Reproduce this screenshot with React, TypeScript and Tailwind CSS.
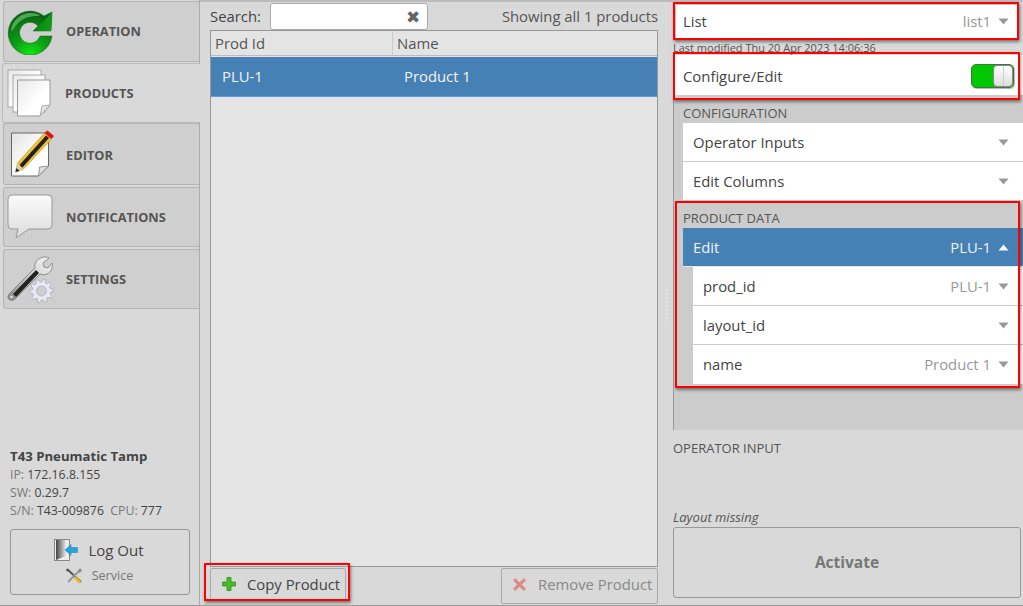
import React from "react";

const Caret = ({ up = false, color = "#999" }: { up?: boolean; color?: string }) => (
  <svg width="11" height="7" viewBox="0 0 11 7" className="shrink-0">
    <path d={up ? "M0.5 6.5 L5.5 0.5 L10.5 6.5 Z" : "M0.5 0.5 L10.5 0.5 L5.5 6.5 Z"} fill={color} />
  </svg>
);

const Marker = ({ className }: { className: string }) => (
  <div className={`absolute z-20 border-2 border-[#f00] shadow-[1px_2px_3px_rgba(0,0,0,0.45)] pointer-events-none ${className}`} />
);

const RefreshIcon = () => (
  <svg width="46" height="46" viewBox="0 0 46 46">
    <defs>
      <radialGradient id="g1" cx="0.5" cy="1" r="1">
        <stop offset="0" stopColor="#10ee10" />
        <stop offset="0.4" stopColor="#0ca014" />
        <stop offset="1" stopColor="#0a5c12" />
      </radialGradient>
      <linearGradient id="g2" x1="0" y1="0" x2="1" y2="0">
        <stop offset="0" stopColor="#0a8412" />
        <stop offset="1" stopColor="#0d9e16" />
      </linearGradient>
    </defs>
    <path d="M45 27 A22 22 0 1 1 37 7 L45 3 L44 22 L26 22 L31 17 A10.5 10.5 0 1 0 33 27 Z" fill="url(#g1)" stroke="#0a5c12" strokeWidth="0.5" />
    <path d="M45 3 L44 22 L26 22 L36 13 Z" fill="url(#g2)" />
    <path d="M4 22 C5 11 14 4 24 4 C28 4 31 5 33 7 C26 6.5 17 8 11 14 C8 17 6 22 4 22 Z" fill="#8ad88a" opacity="0.55" />
  </svg>
);

const PagesIcon = () => (
  <svg width="44" height="48" viewBox="0 0 44 48">
    <defs>
      <linearGradient id="p1" x1="0" y1="0" x2="1" y2="1">
        <stop offset="0" stopColor="#e8e8e8" />
        <stop offset="0.6" stopColor="#ffffff" />
      </linearGradient>
    </defs>
    <rect x="1" y="1" width="33" height="37" fill="url(#p1)" stroke="#aaa" />
    <rect x="6" y="6" width="32" height="37" fill="url(#p1)" stroke="#aaa" />
    <path d="M10.5 11 H43 V36 L33 47 H10.5 Z" fill="url(#p1)" stroke="#999" />
    <path d="M33 47 L35 37 L43 36 Z" fill="#e4e4e4" stroke="#aaa" />
  </svg>
);

const EditorIcon = () => (
  <svg width="46" height="48" viewBox="0 0 46 48" className="overflow-visible">
    <defs>
      <linearGradient id="e1" x1="0" y1="0" x2="1" y2="1">
        <stop offset="0" stopColor="#e4e4e4" />
        <stop offset="0.6" stopColor="#ffffff" />
      </linearGradient>
    </defs>
    <g transform="translate(2.5 0)">
      <path d="M2 3 H39 V36 L29 46 H2 Z" fill="url(#e1)" stroke="#666" />
      <path d="M29 46 L30 37 L39 36 Z" fill="#ddd" stroke="#999" />
      <path d="M6 42 L8 33 L35 3 L42 9 L14 39 Z" fill="#f2c230" stroke="#b58c12" strokeWidth="0.6" />
      <path d="M9.5 35.5 L36.5 5.5 L39.5 8 L12.5 38 Z" fill="#222" />
      <path d="M35 3 L38 0.5 L44.5 6 L42 9 Z" fill="#d81818" />
      <path d="M6 42 L8 33 L14 39 Z" fill="#e4c9a0" />
      <path d="M6 42 L7 38 L10 41 Z" fill="#222" />
    </g>
  </svg>
);

const BubbleIcon = () => (
  <svg width="46" height="46" viewBox="0 0 46 46">
    <defs>
      <linearGradient id="b1" x1="0" y1="0" x2="0" y2="1">
        <stop offset="0" stopColor="#fbfbfb" />
        <stop offset="1" stopColor="#dcdcdc" />
      </linearGradient>
    </defs>
    <path d="M5 1 H41 A4 4 0 0 1 45 5 V31 A4 4 0 0 1 41 35 H22 L9 44 L11 35 H5 A4 4 0 0 1 1 31 V5 A4 4 0 0 1 5 1 Z" fill="url(#b1)" stroke="#999" strokeWidth="1" />
  </svg>
);

const gearPath = (() => {
  const cx = 34.5;
  const cy = 36;
  const teeth = 10;
  const pts: string[] = [];
  for (let i = 0; i < teeth; i++) {
    const a = (i / teeth) * Math.PI * 2;
    const step = (Math.PI * 2) / teeth;
    const rad: [number, number][] = [
      [9, -0.5],
      [11.8, -0.28],
      [11.8, 0.05],
      [9, 0.22],
    ];
    rad.forEach(([r, off]) => {
      const t = a + off * step;
      pts.push(`${(cx + r * Math.cos(t)).toFixed(2)} ${(cy + r * Math.sin(t)).toFixed(2)}`);
    });
  }
  return `M${pts.join(" L")} Z M${cx + 5} ${cy} A5 5 0 1 0 ${cx - 5} ${cy} A5 5 0 1 0 ${cx + 5} ${cy} Z`;
})();

const SettingsIcon = () => (
  <svg width="48" height="48" viewBox="0 0 48 48" className="overflow-visible">
    <defs>
      <linearGradient id="w1" x1="0" y1="1" x2="1" y2="0">
        <stop offset="0" stopColor="#888" />
        <stop offset="0.6" stopColor="#d8d8d8" />
        <stop offset="1" stopColor="#f4f4f4" />
      </linearGradient>
    </defs>
    <path d="M1 42 C1 40 2 39 3 38 L28 13 C27 8 30 3 37 2 C39 2 40 2 42 3 L36 8 L37 12 L41 13 L45 8 C46 13 44 17 40 19 C38 20 35 20 33 19 L8 44 C6 46 1 46 1 42 Z" fill="url(#w1)" stroke="#777" strokeWidth="0.8" />
    <path d="M6 39 L29 15 L32 18 L9 42 Z" fill="#222" />
    <circle cx="4.5" cy="42" r="1.8" fill="#ddd" stroke="#777" strokeWidth="0.6" />
    <path d={gearPath} fill="#e9e9f3" stroke="#a8a8c4" strokeWidth="0.8" fillRule="evenodd" />
  </svg>
);

const DoorIcon = () => (
  <svg width="24" height="22" viewBox="0 0 24 22">
    <defs>
      <linearGradient id="d1" x1="0" y1="0" x2="1" y2="0">
        <stop offset="0" stopColor="#444" />
        <stop offset="1" stopColor="#e8e8e8" />
      </linearGradient>
    </defs>
    <rect x="0.5" y="0.5" width="15" height="21" fill="#eee" stroke="#888" />
    <path d="M2 1 L12 1 L12 17 L2 21 Z" fill="url(#d1)" />
    <path d="M11 11 L17 5.5 V8.5 H23.5 V13.5 H17 V16.5 Z" fill="#27a3e0" stroke="#1b7fb8" strokeWidth="0.5" />
  </svg>
);

const ToolsIcon = () => (
  <svg width="18" height="16" viewBox="0 0 18 16">
    <path d="M2 1 L16 14" stroke="#555" strokeWidth="2" />
    <path d="M16 1 L3 14" stroke="#999" strokeWidth="2" />
    <path d="M10 9 L15 14.5" stroke="#e8b820" strokeWidth="3" />
    <path d="M14 0.5 L17 3 L14 5 Z" fill="#888" />
    <path d="M1 1 L4 1 L2 4 Z" fill="#555" />
  </svg>
);

const PlusIcon = () => (
  <svg width="14" height="14" viewBox="0 0 14 14">
    <path d="M5 0.5 H9 V5 H13.5 V9 H9 V13.5 H5 V9 H0.5 V5 H5 Z" fill="#4cbb2a" stroke="#2f8a18" strokeWidth="0.8" />
  </svg>
);

const CrossIcon = () => (
  <svg width="13" height="13" viewBox="0 0 13 13">
    <path d="M2 0.5 L6.5 4.5 L11 0.5 L12.5 2.5 L8.5 6.5 L12.5 10.5 L11 12.5 L6.5 8.5 L2 12.5 L0.5 10.5 L4.5 6.5 L0.5 2.5 Z" fill="#e08a8a" stroke="#c77" strokeWidth="0.5" />
  </svg>
);

const Row = ({ label, value }: { label: string; value?: string }) => (
  <div className="flex items-center h-[39px] bg-white border-b border-[#ccc] last:border-b-0 pr-[14px] pl-[10px]">
    <span className="flex-1 text-[#444]">{label}</span>
    {value && <span className="text-[#999] mr-[7px]">{value}</span>}
    <Caret />
  </div>
);

const Tab = ({ label, icon, className, labelClass = "" }: { label: string; icon: React.ReactNode; className: string; labelClass?: string }) => (
  <div className={`flex items-center ml-[3px] pl-[3px] border border-r-0 border-[#b4b4b4] rounded-l-[3px] bg-[#cfcfcf] ${className}`}>
    <div className="w-[46px] flex justify-start"><span className="flex">{icon}</span></div>
    <span className={`ml-[13px] text-[12.8px] font-bold text-[#555] ${labelClass}`}>{label}</span>
  </div>
);

export default function App() {
  return (
    <div className="w-[1023px] h-[606px] overflow-hidden flex bg-[#d9d9d9] text-[14.85px] text-[#444] border-b border-[#999]" style={{ fontFamily: '"Open Sans", sans-serif' }}>
      {/* Sidebar */}
      <aside className="w-[200px] h-full shrink-0 flex flex-col border-r border-[#aaa] pt-px">
        <Tab label="OPERATION" icon={<RefreshIcon />} className="h-[61px] mb-px" />
        <div className="flex items-center h-[60px] -mr-px ml-[2px] pl-[4px] border border-r-0 border-[#bbb] rounded-l-[3px] bg-[#d9d9d9] relative z-10">
          <div className="w-[44px] flex justify-start"><span className="flex"><PagesIcon /></span></div>
          <span className="ml-[14px] pt-[2px] text-[12.8px] font-bold text-[#555]">PRODUCTS</span>
        </div>
        <Tab label="EDITOR" icon={<EditorIcon />} className="h-[62px] mb-[2px]" labelClass="pt-[4px]" />
        <Tab label="NOTIFICATIONS" icon={<BubbleIcon />} className="h-[60px] mb-[2px]" labelClass="pt-[2px]" />
        <Tab label="SETTINGS" icon={<SettingsIcon />} className="h-[60px]" labelClass="pt-[2px]" />
        <div className="mt-auto pl-[10px] pr-[9px] pb-[10px] text-[12.3px] leading-[18px]">
          <div className="font-bold text-[#444] text-[13.2px] mb-px">T43 Pneumatic Tamp</div>
          <div className="text-[#777]">IP: <span className="text-[#444]">172.16.8.155</span></div>
          <div className="text-[#777]">SW: <span className="text-[#444]">0.29.7</span></div>
          <div className="text-[#777]">S/N: <span className="text-[#444]">T43-009876</span>&nbsp; CPU: <span className="text-[#444]">777</span></div>
          <div className="mt-[9px] h-[66px] border border-[#999] rounded-[3px] flex flex-col items-center justify-center">
            <div className="flex items-center gap-[10px] mr-[2px] text-[15px] leading-[22px] text-[#444]"><DoorIcon /><span>Log Out</span></div>
            <div className="flex items-center gap-[9px] mr-[2px] mt-[6px] text-[12.6px] text-[#777]"><ToolsIcon /><span>Service</span></div>
          </div>
        </div>
      </aside>

      {/* Middle column */}
      <main className="w-[473px] shrink-0 h-full flex flex-col border-t-2 border-[#bbb] pl-[10px] pr-[15px] relative">
        <div className="flex items-center h-[28px] shrink-0">
          <span className="w-[60px]">Search:</span>
          <div className="w-[158px] h-[27px] bg-white border border-[#aaa] rounded-[3px] flex items-center justify-end pr-[7px]">
            <span className="text-[17px] leading-none text-[#666]">✖</span>
          </div>
          <span className="ml-auto text-[#555]">Showing all 1 products</span>
        </div>
        <div className="flex-1 border border-[#999] bg-[#e4e4e4] flex flex-col min-h-0">
          <div className="flex h-[25px] border-b border-[#bbb] shrink-0 items-center mb-px">
            <span className="w-[182px] pl-[4px] border-r border-[#ccc] h-full flex items-center text-[#555]">Prod Id</span>
            <span className="pl-[4px] text-[#555]">Name</span>
          </div>
          <div className="flex h-[40px] items-center bg-[#4581b5] border-b border-[#5c9ad6] text-[#f2f2f2] shrink-0">
            <span className="w-[193px] pl-[11px]">PLU-1</span>
            <span>Product 1</span>
          </div>
        </div>
        <div className="flex justify-between h-[38px] pt-px shrink-0">
          <div className="relative h-[32px] w-[136px]">
            <button className="w-full h-full border border-[#aaa] rounded-[2px] flex items-center pl-[11px] gap-[11px] text-[#444]"><PlusIcon /><span>Copy Product</span></button>
            <Marker className="-left-[6px] -top-[5px] -right-[4px] -bottom-[1px]" />
          </div>
          <button className="h-[36px] w-[157px] border border-[#aaa] rounded-[2px] flex items-center pl-[11px] pb-[3px] gap-[12px] text-[#888]"><CrossIcon /><span>Remove Product</span></button>
        </div>
        {/* splitter */}
        <div className="absolute right-[5px] top-[286px] w-[3px] h-[34px] [background-image:radial-gradient(circle,#eee_1px,transparent_1px)] [background-size:3px_4px]" />
      </main>

      {/* Right column */}
      <section className="flex-1 h-full flex flex-col border-t-2 border-[#bbb] min-w-0 relative">
        <div className="relative ml-[3px] mr-[6px] mt-[3px] h-[33px] shrink-0 flex items-center bg-white pl-[7px] pr-[8px] shadow-[0_0_3px_rgba(0,0,0,0.3)]">
          <span className="flex-1">List</span>
          <span className="text-[#999] mr-[7px]">list1</span>
          <Caret />
          <Marker className="-left-[3px] -top-[3px] -right-[2px] -bottom-[2px]" />
        </div>
        <div className="h-[15px] shrink-0 mt-[2px] pt-px text-[11px] leading-[14px] text-[#555]">Last modified Thu 20 Apr 2023 14:06:36</div>

        <div className="flex-1 flex flex-col min-h-0">
          <div className="relative ml-px h-[40px] pt-[2px] shrink-0 flex items-center bg-white pl-[9px] pr-[9px]">
            <span className="flex-1">Configure/Edit</span>
            <div className="w-[43px] h-[24px] rounded-[5px] bg-[#00c800] border border-[#3a7a3a] flex justify-end shadow-[1px_1px_1px_rgba(0,0,0,0.3)]">
              <div className="w-[20px] h-full rounded-[4px] bg-gradient-to-b from-white to-[#ddd] border border-[#888] flex justify-center"><div className="w-px h-full bg-white border-r border-[#ccc]" /></div>
            </div>
            <Marker className="-left-px -top-[3px] right-[3px] -bottom-[5px]" />
          </div>

          <div className="bg-[#cccccc] h-[335px] shrink-0 pl-[9px] border-l border-[#999] relative">
            <div className="h-[28px] flex items-end pb-[1px] text-[13px] leading-[18px] text-[#555]">CONFIGURATION</div>
            <Row label="Operator Inputs" />
            <Row label="Edit Columns" />
            <div className="relative">
              <div className="h-[27px] pt-[8px] text-[13px] leading-[18px] text-[#555]">PRODUCT DATA</div>
              <div className="flex items-center h-[39px] bg-[#4581b5] text-[#f2f2f2] pl-[10px] pr-[14px] border-b border-[#e8e8e8]">
                <span className="flex-1">Edit</span>
                <span className="mr-[7px]">PLU-1</span>
                <Caret up color="#f4f4f4" />
              </div>
              <div className="pl-[10px]">
                <Row label="prod_id" value="PLU-1" />
                <Row label="layout_id" />
                <Row label="name" value="Product 1" />
              </div>
              <Marker className="-left-[8px] top-[0px] right-[3px] -bottom-[4px]" />
            </div>
          </div>

          <div className="flex-1 flex flex-col min-h-0">
            <div className="pt-[9px] text-[13px] leading-[18px] text-[#555]">OPERATOR INPUT</div>
            <div className="mt-auto text-[13px] leading-[16px] italic text-[#555] mb-[2px]">Layout missing</div>
            <div className="h-[71px] w-[348px] mb-[7px] border border-[#999] rounded-[3px] flex items-center justify-center font-bold text-[15.5px] text-[#777]">Activate</div>
          </div>
        </div>
      </section>
    </div>
  );
}
